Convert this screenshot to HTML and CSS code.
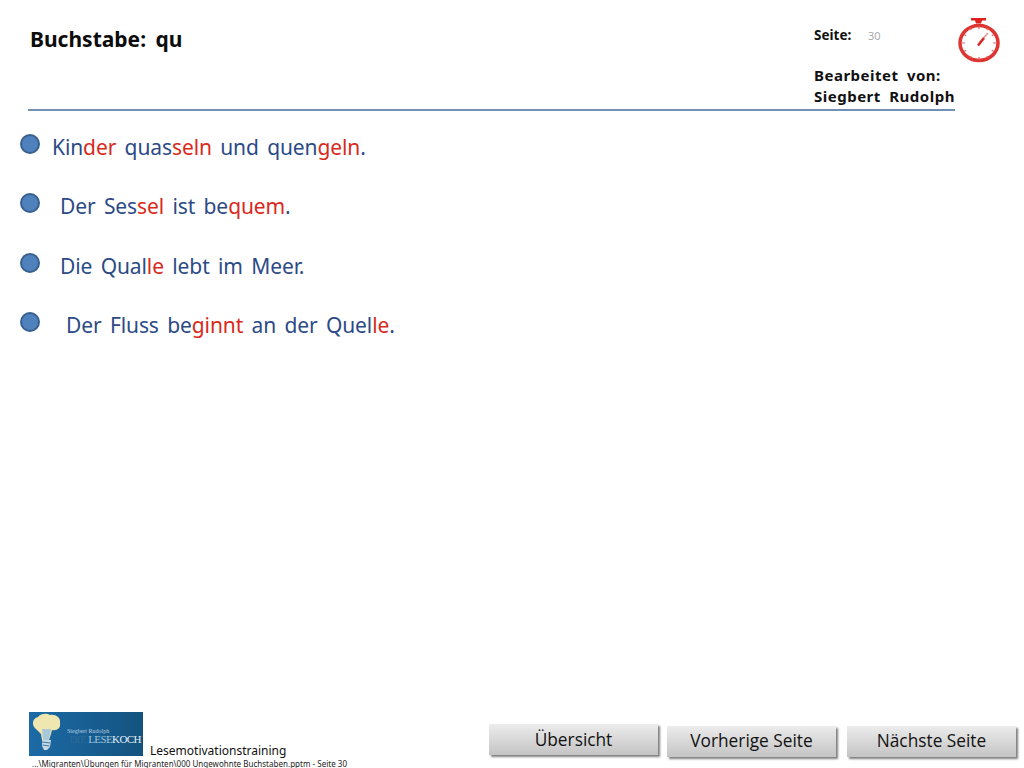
FILE: index.html
```html
<!DOCTYPE html>
<html lang="de">
<head>
<meta charset="utf-8">
<title>Buchstabe: qu</title>
<link rel="stylesheet" href="styles.css">
</head>
<body>
<div class="slide">
  <header class="head">
    <h1 class="title">Buchstabe: qu</h1>
    <div class="meta">
      <div class="page"><span class="page-label">Seite:</span><span class="page-num">30</span></div>
      <div class="author">Bearbeitet von:<br>Siegbert Rudolph</div>
    </div>
    <svg class="timer" viewBox="0 0 44 46" width="44" height="46">
      <path d="M14 0h15v2.500h-4l-1 3h-5l-1-3h-4z" fill="#e0201c"/>
      <ellipse cx="22" cy="25" rx="19" ry="17.500" fill="none" stroke="#dd3531" stroke-width="3.500"/>
      <path d="M22 8v3M22 39v3M5 25h3M36 25h3M13 10l1.200 2M31 10l-1.200 2M7 16.500l2.200 1.200M37 16.500l-2.200 1.200M7 33.500l2.200-1.200M37 33.500l-2.200-1.200M13 40l1.200-2M31 40l-1.200-2" stroke="#e2605c" stroke-width="1.200"/>
      <path d="M22 25L31 15" stroke="#e8908c" stroke-width="1.500"/>
      <path d="M21 27.500L27 20" stroke="#d62c28" stroke-width="2.500"/>
    </svg>
  </header>

  <ul class="lines">
    <li class="line"><span class="dot"></span><span class="txt i0">Kin<b>der</b> quas<b>seln</b> und quen<b>geln</b>.</span></li>
    <li class="line"><span class="dot"></span><span class="txt i1">Der Ses<b>sel</b> ist be<b>quem</b>.</span></li>
    <li class="line"><span class="dot"></span><span class="txt i1">Die Qual<b>le</b> lebt im Meer.</span></li>
    <li class="line"><span class="dot"></span><span class="txt i2">Der Fluss be<b>ginnt</b> an der Quel<b>le</b>.</span></li>
  </ul>

  <footer class="foot">
    <div class="brand">
      <div class="brand-row">
        <svg class="logo" viewBox="0 0 114 44" width="114" height="44">
          <defs>
            <linearGradient id="lg" x1="0" y1="0" x2="1" y2="0">
              <stop offset="0" stop-color="#1c6aa6"/>
              <stop offset="1" stop-color="#14537f"/>
            </linearGradient>
          </defs>
          <rect width="114" height="44" fill="url(#lg)"/>
          <path d="M8 18C2 14 3 6 9 5c3-4 9-4 12-2 5-1 11 2 10 8 1 5-3 8-8 7l-1 4-2 6h-7l-1-6z" fill="#f0e6b0"/>
          <path d="M13 17l1 11h6l2-11z" fill="#a9c8d8"/>
          <path d="M13 28h9l-1 7-3 3h-3l-2-4z" fill="#c8d8e0"/>
          <path d="M13 30l8 1M13.500 33l7 1" stroke="#3a7aa6" stroke-width="1"/>
          <text x="38" y="21" class="logo-small">Siegbert Rudolph</text>
          <text x="40.500" y="31" class="logo-big"><tspan fill="#2a6a98">DIE</tspan> <tspan fill="#9cc4de">LESE</tspan><tspan fill="#e4eef4">KOCH</tspan></text>
        </svg>
        <span class="brand-name">Lesemotivationstraining</span>
      </div>
      <div class="path">...\Migranten\Übungen für Migranten\000 Ungewohnte Buchstaben.pptm - Seite 30</div>
    </div>
    <nav class="nav">
      <a class="btn btn-up">Übersicht</a>
      <a class="btn">Vorherige Seite</a>
      <a class="btn btn-last">Nächste Seite</a>
    </nav>
  </footer>
</div>
</body>
</html>
```
FILE: styles.css
```css
* { box-sizing: border-box; }
html, body { margin: 0; padding: 0; background: #fff; }
.slide {
  width: 1024px;
  height: 768px;
  display: flex;
  flex-direction: column;
  overflow: hidden;
  font-family: "Noto Sans", sans-serif;
}
.head {
  height: 111px;
  margin-left: 28px;
  width: 927px;
  border-bottom: 2px solid #7090b4;
  display: flex;
  position: relative;
}
.title {
  margin: 0;
  padding: 25px 0 0 2px;
  font-size: 21px;
  line-height: 28px;
  font-weight: 700;
  color: #0c0c0c;
  word-spacing: 4px;
  flex: 1;
}
.meta { width: 141px; flex: none; padding-top: 26px; color: #111; }
.page { display: flex; align-items: center; height: 18px; }
.page-label { font-size: 13.500px; font-weight: 700; width: 54px; }
.page-num { font-size: 11px; color: #aaa; }
.author {
  margin-top: 21px;
  font-size: 15px;
  line-height: 21px;
  font-weight: 700;
  letter-spacing: 0.5px;
  word-spacing: 4px;
  white-space: nowrap;
}
.timer { position: absolute; left: 929px; top: 18px; }
.lines { list-style: none; margin: 14px 0 0 20px; padding: 0; display: flex; flex-direction: column; gap: 29.300px; flex: 1; }
.line { display: flex; align-items: flex-start; height: 30px; }
.dot {
  width: 20px;
  height: 20px;
  border-radius: 50%;
  background: #4f81bd;
  border: 2px solid #38608f;
  flex: none;
  margin-top: 9px;
}
.txt {
  font-size: 21px;
  line-height: 30px;
  color: #2c4a86;
  padding-top: 7px;
  letter-spacing: -0.1px;
  word-spacing: 3px;
  white-space: nowrap;
}
.txt b { font-weight: 400; color: #d9291c; }
.i0 { margin-left: 12px; }
.i1 { margin-left: 20px; }
.i2 { margin-left: 26px; }
.foot { height: 57px; display: flex; align-items: flex-start; flex: none; }
.brand { width: 460px; margin-left: 29px; flex: none; margin-top: -1px; }
.brand-row { display: flex; align-items: flex-end; height: 46px; }
.logo { flex: none; display: block; }
.logo-small { font-family: "Liberation Serif", serif; font-size: 6px; fill: #b8d0e0; }
.logo-big { font-family: "Liberation Serif", serif; font-size: 11px; letter-spacing: -0.6px; }
.brand-name { font-size: 12px; line-height: 14px; margin-left: 7px; color: #111; margin-bottom: -2px; }
.path { font-size: 8px; line-height: 11px; color: #222; margin-left: 3px; margin-top: 2px; white-space: nowrap; letter-spacing: 0.02px; }
.nav { display: flex; align-items: flex-start; gap: 10px; padding-top: 1px; }
.btn {
  width: 169px;
  height: 31px;
  margin-top: 14px;
  background: linear-gradient(#ececec, #c4c4c4);
  box-shadow: 2px 2px 2px #7f7f7f;
  font-family: "Open Sans", sans-serif;
  font-size: 17.300px;
  line-height: 30px;
  color: #111;
  text-align: center;
}
.btn-up { margin-top: 12px; margin-right: -1px; line-height: 31px; }
.btn-last { margin-left: 1px; }
```
